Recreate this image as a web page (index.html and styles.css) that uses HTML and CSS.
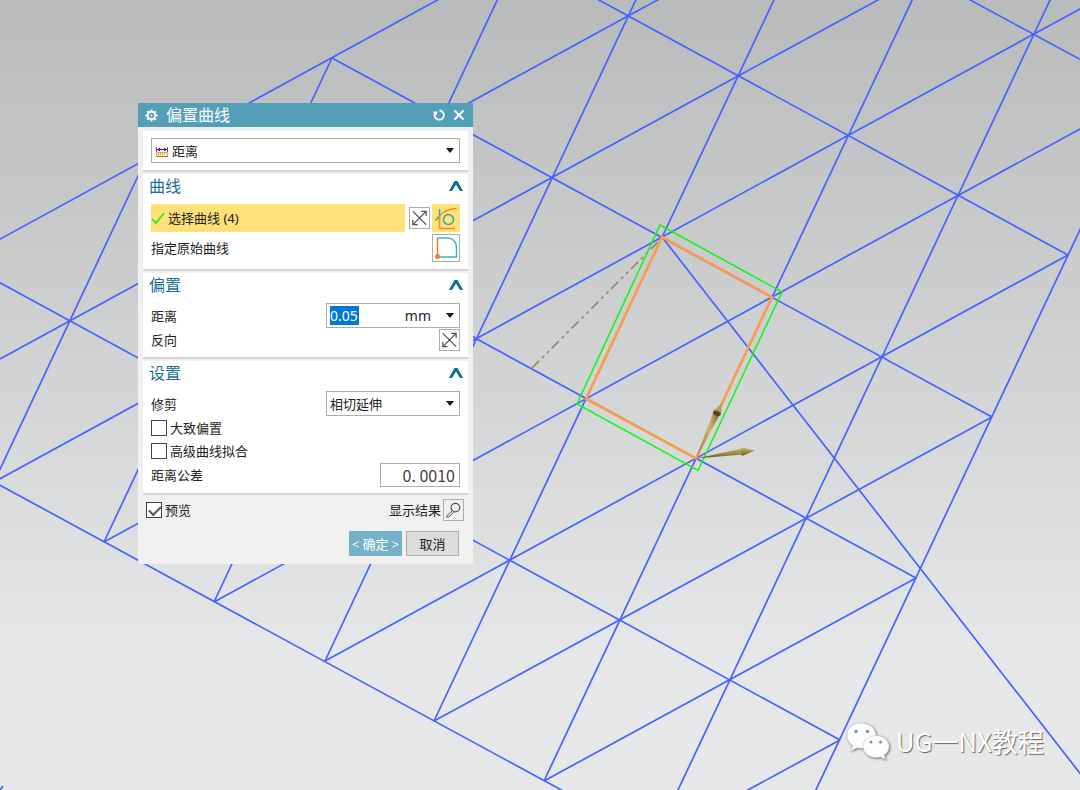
FILE: index.html
```html
<!DOCTYPE html>
<html lang="zh-CN">
<head>
<meta charset="utf-8">
<title>偏置曲线</title>
<link rel="stylesheet" href="styles.css">
</head>
<body>
<main class="viewport">
  <svg class="scene" viewBox="0 0 1080 790" preserveAspectRatio="xMinYMin slice" aria-hidden="true">
    <defs>
      <linearGradient id="brass" x1="0" y1="0" x2="0" y2="1">
        <stop offset="0" stop-color="#cdb970"/><stop offset="0.5" stop-color="#a08c48"/><stop offset="1" stop-color="#64521c"/>
      </linearGradient>
      <linearGradient id="brassUp" x1="0" y1="0" x2="1" y2="0">
        <stop offset="0" stop-color="#8d7a3b"/><stop offset="0.6" stop-color="#cbb76f"/><stop offset="1" stop-color="#7d6a30"/>
      </linearGradient>
    </defs>
    <g class="mesh">
      <path d="M924-25L1144 94M518-44L1068 255M332 58L992 417M146 159L916 578M-40 261L840 740M-6 482L764 900"/>
      <path d="M146 159L-6 482M332 58L104 542M518-44L214 602M704-145L325 661M814-85L434 721M924-25L544 781M1034 34L654 841M1110-127L1034 34M1144 94L764 900"/>
      <path d="M518-44L-40 261M628 16L0 359M814-85L628 16M738 76L-6 482M924-25L738 76M848 135.500L104 542M1034 34L848 135.500M1220-67L1034 34M958 195.500L214 602M1144 94L958 195.500M1068 255L325 661M992 417L434 721M916 578L544 781M840 740L654 841"/>
      <path d="M662 237L1093 790M0 790L3 786"/>
    </g>
    <path d="M532 368L662 238" class="axis"/>
    <path d="M660 225L782 292L698 470.500L577 404Z" class="offset-curve"/>
    <path d="M662 237L772 297L696 458.500L586 399Z" class="picked-curve"/>
    <path d="M696 458.500L713 413L719 416Z" fill="url(#brassUp)"/>
    <path d="M722 403L721 415L713 411Z" fill="#b7a359"/>
    <ellipse cx="717" cy="413.500" rx="4" ry="2.500" fill="#54471f" transform="rotate(20 717 413)"/>
    <path d="M696 458.500L742 448.500L743 454.500Z" fill="url(#brass)"/>
    <path d="M755 450.500L742 447.500L740 450L742 456Z" fill="url(#brass)"/>
  </svg>

  <form class="dialog" aria-labelledby="dialog-title">
    <header class="titlebar">
      <svg class="gear" viewBox="0 0 14 14" aria-hidden="true"><circle cx="7" cy="7" r="4" fill="none" stroke="#fff" stroke-width="2"/><circle cx="7" cy="7" r="1" fill="#fff"/><path d="M7 .5v2M7 11.500v2M.5 7h2M11.500 7h2M2.400 2.400l1.400 1.400M10.200 10.200l1.400 1.400M2.400 11.600l1.400-1.400M10.200 3.800l1.400-1.400" stroke="#fff" stroke-width="2"/></svg>
      <h1 id="dialog-title">偏置曲线</h1>
      <button type="button" class="title-btn" aria-label="重置"><svg viewBox="0 0 12 12"><path d="M6.500 1.500A4.600 4.600 0 1 1 1.900 4.500" fill="none" stroke="#fff" stroke-width="1.800"/><path d="M.5 4.500V2.500h3.700v3.700z" fill="#fff"/></svg></button>
      <button type="button" class="title-btn" aria-label="关闭"><svg viewBox="0 0 12 12"><path d="M1.500 1.500l9 9M10.500 1.500l-9 9" stroke="#fff" stroke-width="2"/></svg></button>
    </header>

    <div class="sections">
      <section class="section section-type">
        <div class="select type-select">
          <svg class="type-icon" viewBox="0 0 12 10" aria-hidden="true"><path d="M.5 0v5M11.500 0v5" stroke="#d8262c"/><path d="M1 2.500h10" stroke="#2422a0"/><path d="M4 .5L1 2.500l3 2zM8 .5l3 2-3 2z" fill="#2422a0"/><path d="M.5 5.500h11v4H.5z" fill="#fff3c0" stroke="#dfa746"/><path d="M2 7h8" stroke="#9b5c36" stroke-dasharray="1 1"/><path d="M1 9.500h11" stroke="#b37321"/></svg>
          <select aria-label="类型"><option>距离</option></select>
        </div>
      </section>

      <section class="section section-curve">
        <div class="head"><h2>曲线</h2><button type="button" class="fold" aria-label="收起曲线"><svg viewBox="0 0 14 12"><path d="M0 11L5.500 1H8.500L14 11H11L7 4.500L3 11Z"/></svg></button></div>
        <div class="row pick-row">
          <div class="pick"><svg viewBox="0 0 14 12" aria-hidden="true"><path d="M1 7l4 4L13 1" fill="none" stroke="#3be52d" stroke-width="2"/></svg><span>选择曲线 (4)</span></div>
          <button type="button" class="icon-btn" aria-label="反向曲线"><svg viewBox="0 0 20 20"><path d="M3 3l14 14M3 17L17 3M12 3h5v5M3 12v5h5" fill="none" stroke="#505050" stroke-width="1.300"/></svg></button>
          <button type="button" class="icon-btn large active" aria-label="曲线规则"><svg viewBox="0 0 28 28"><path d="M7.500 5v11M3.500 16.500L8 11.500" fill="none" stroke="#23aeb3" stroke-width="1.500"/><circle cx="16.500" cy="15.500" r="5" fill="none" stroke="#23aeb3" stroke-width="1.500"/><path d="M24.500 4.500C17 5 11 7 7.500 12v12.500h15.500" fill="none" stroke="#f58a25" stroke-width="1.500"/></svg></button>
        </div>
        <div class="row tall">
          <span>指定原始曲线</span>
          <button type="button" class="icon-btn large" aria-label="指定原始曲线"><svg viewBox="0 0 26 26"><path d="M4.500 3h9C20 3 23.500 7 23.500 13v9h-19" fill="none" stroke="#35b5d0" stroke-width="1.500"/><path d="M4.500 3v19" stroke="#e78024" stroke-width="1.500"/><circle cx="4.500" cy="21.500" r="2.500" fill="#ed8125"/></svg></button>
        </div>
      </section>

      <section class="section section-offset">
        <div class="head"><h2>偏置</h2><button type="button" class="fold" aria-label="收起偏置"><svg viewBox="0 0 14 12"><path d="M0 11L5.500 1H8.500L14 11H11L7 4.500L3 11Z"/></svg></button></div>
        <div class="row field-row">
          <label for="distance">距离</label>
          <div class="combo"><input id="distance" type="text" value="0.05"><span class="unit">mm</span><button type="button" class="combo-btn" aria-label="距离选项"></button></div>
        </div>
        <div class="row reverse-row">
          <span>反向</span>
          <button type="button" class="icon-btn" aria-label="反向"><svg viewBox="0 0 20 20"><path d="M3 3l14 14M3 17L17 3M12 3h5v5M3 12v5h5" fill="none" stroke="#505050" stroke-width="1.300"/></svg></button>
        </div>
      </section>

      <section class="section section-settings">
        <div class="head"><h2>设置</h2><button type="button" class="fold" aria-label="收起设置"><svg viewBox="0 0 14 12"><path d="M0 11L5.500 1H8.500L14 11H11L7 4.500L3 11Z"/></svg></button></div>
        <div class="row field-row">
          <label for="trim">修剪</label>
          <div class="select trim-select"><select id="trim"><option>相切延伸</option></select></div>
        </div>
        <label class="check"><input type="checkbox">大致偏置</label>
        <label class="check"><input type="checkbox">高级曲线拟合</label>
        <div class="row field-row">
          <label for="tolerance">距离公差</label>
          <input id="tolerance" class="tolerance" type="text" value="0. 0010">
        </div>
      </section>
    </div>

    <div class="preview">
      <label class="check"><input type="checkbox" checked>预览</label>
      <span class="result-label">显示结果</span>
      <button type="button" class="icon-btn result" aria-label="显示结果"><svg viewBox="0 0 20 20"><circle cx="12" cy="7.500" r="4.500" fill="none" stroke="#4f4f4f" stroke-width="1.300"/><path d="M9 10.500l1.500 1.500-5.500 5.500H3v-1.500z" fill="#ddd" stroke="#4f4f4f"/></svg></button>
    </div>
    <footer class="actions">
      <button type="submit" class="btn ok">&lt; 确定 &gt;</button>
      <button type="button" class="btn cancel">取消</button>
    </footer>
  </form>

  <div class="watermark">
    <svg viewBox="0 0 44 38" aria-hidden="true">
      <path d="M15 1C7 1 1 6.500 1 13.500c0 4 2 7.500 5.500 10L5 29l6-3.200c6 1.500 19-1 19-12.300C30 6.500 23 1 15 1z"/>
      <path d="M30 13.500c-7.500 0-13 5-13 11 0 6.500 6 11 13 11 1.500 0 3 0 4.500-.6L39.500 37.500l-1.200-4.500c3-2 4.900-5 4.900-8.500 0-6-5.700-11-13.200-11z"/>
      <g class="eyes"><circle cx="10" cy="9.500" r="1.700"/><circle cx="21.500" cy="9.500" r="1.700"/><circle cx="25" cy="20" r="1.500"/><circle cx="34.500" cy="20" r="1.500"/></g>
    </svg>
    <span>UG一NX教程</span>
  </div>
</main>
</body>
</html>
```
FILE: styles.css
```css
* { box-sizing: border-box; }

body {
  margin: 0;
  font-family: "Noto Sans", "Noto Sans CJK SC", sans-serif;
  font-size: 13px;
  line-height: 20px;
  color: #222;
}

button, input, select { font: inherit; color: inherit; margin: 0; }
button { padding: 0; border: 0; background: none; }
svg { display: block; }

.viewport {
  position: relative;
  height: 100vh;
  overflow: hidden;
  background: linear-gradient(#b9babc 0%, #d4d5d7 51%, #e6e7e9 83%, #e6e7e9 100%);
}

.scene { width: 100%; height: 100%; }
.mesh path { fill: none; stroke: #4862ff; stroke-width: 1.7; }
.axis { stroke: #968b6a; stroke-width: 1.7; stroke-dasharray: 10 4 3 4 3 4; }
.offset-curve { fill: none; stroke: #0bfa12; stroke-width: 1.5; }
.picked-curve { fill: none; stroke: #fb9e4a; stroke-width: 2.6; }

.dialog {
  position: absolute;
  left: 138px;
  top: 103px;
  width: 335px;
  background: #f0f0f0;
}

.titlebar {
  display: flex;
  align-items: center;
  gap: 8px;
  height: 24px;
  padding: 0 8px 0 7px;
  background: #549fb8;
  color: #fff;
}
.titlebar h1 { flex: 1; margin: 0; font-size: 16px; font-weight: 400; line-height: 24px; }
.gear { width: 13px; height: 13px; }
.title-btn svg { width: 12px; height: 12px; }

.sections { padding: 4px 5px 0; }
.section {
  margin-bottom: 2px;
  padding: 0 8px;
  background: #fff;
  border-bottom: 2px solid #d4d4d4;
}
.section:last-child { margin-bottom: 0; }
.section-type { padding-top: 7px; padding-bottom: 7px; }
.section-curve { padding-bottom: 7px; }
.section-offset { padding-bottom: 5px; }
.section-settings { padding-bottom: 6px; }

.head { display: flex; align-items: center; justify-content: space-between; height: 30px; padding-bottom: 6px; margin: 0 -3px 0 -2px; }
.head h2 { margin: 0; font-size: 16px; font-weight: 400; line-height: 22px; color: #1b6f93; }
.fold svg { width: 14px; height: 12px; fill: #0c6d8f; }

.row { display: flex; align-items: center; justify-content: space-between; }
.pick-row { gap: 2px; margin-bottom: 2px; }
.pick {
  flex: 1;
  display: flex;
  align-items: center;
  gap: 3px;
  height: 28px;
  margin-right: 2px;
  background: #ffe079;
}
.pick svg { width: 14px; height: 12px; }
.tall { height: 28px; }

.icon-btn { width: 21px; height: 22px; background: #fff; border: 1px solid #adadad; }
.icon-btn svg { width: 100%; height: 100%; }
.icon-btn.large { width: 28px; height: 28px; }
.icon-btn.active { background: #ffe079; border: 0; }
.icon-btn.result { background: #f0f0f0; }

.select { position: relative; }
.select select {
  display: block;
  width: 100%;
  height: 25px;
  padding: 0 20px 0 3px;
  border: 1px solid #adadad;
  border-radius: 0;
  background: #fff;
  appearance: none;
}
.select::after, .combo-btn {
  width: 0;
  height: 0;
  border: 4px solid transparent;
  border-top: 5px solid #1c1c1c;
  border-bottom: 0;
}
.select::after { content: ""; position: absolute; right: 6px; top: 10px; pointer-events: none; }
.type-select select { padding-left: 20px; }
.type-icon { position: absolute; left: 5px; top: 9px; width: 12px; height: 10px; pointer-events: none; }
.trim-select, .combo { width: 134px; }

.combo {
  display: flex;
  align-items: center;
  height: 25px;
  padding: 0 5px 0 3px;
  border: 1px solid #adadad;
  background: #fff;
  font-size: 14px;
}
.combo input { width: 29px; height: 19px; padding: 0; border: 0; background: #0078d7; color: #fff; }
.unit { margin-left: auto; margin-right: 15px; }

.reverse-row { height: 24px; }
.section-settings .field-row { height: 25px; }
.section-settings .check { height: 23px; }

.check { display: flex; align-items: center; gap: 3px; }
.check input {
  appearance: none;
  width: 16px;
  height: 16px;
  border: 1px solid #444;
  background: #fff;
}
.check input:checked::after {
  content: "";
  display: block;
  width: 10px;
  height: 5px;
  margin: 3px 2px;
  border-left: 2px solid #555;
  border-bottom: 2px solid #555;
  transform: rotate(-45deg);
}

.tolerance {
  width: 80px;
  height: 24px;
  padding: 0 4px;
  border: 1px solid #adadad;
  background: #fff;
  font-family: "Noto Sans CJK SC", sans-serif;
  font-size: 16px;
  text-align: right;
  color: #444;
}

.preview { display: flex; align-items: center; gap: 2px; padding: 4px 9px 0 8px; }
.result-label { margin-left: auto; }

.actions { display: flex; justify-content: flex-end; gap: 4px; padding: 10px 14px 8px; }
.btn { width: 53px; height: 25px; }
.ok { background: #74b2c9; color: #fff; white-space: nowrap; }
.cancel { background: #dddddd; border: 1px solid #adadad; }

.watermark {
  position: absolute;
  right: 36px;
  bottom: 29px;
  display: flex;
  align-items: center;
  gap: 6px;
  font-family: "Noto Sans CJK SC", sans-serif;
  font-size: 26px;
  line-height: 40px;
  color: #fff;
  text-shadow: 1px 1px 1px #666;
}
.watermark svg { width: 44px; height: 38px; fill: #fcfdfd; filter: drop-shadow(1px 1px 1px #777); }
.watermark svg path { stroke: #bbb; stroke-width: 0.5; }
.watermark .eyes { fill: #8a8f8f; }
```
